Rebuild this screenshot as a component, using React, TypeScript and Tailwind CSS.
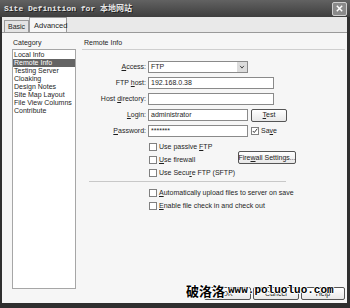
import type { ReactNode } from "react";

const FONT = "font-['Liberation_Sans','Noto_Sans_CJK_SC',sans-serif]";

function Check({ checked }: { checked?: boolean }) {
  return (
    <span className="flex h-[8px] w-[8px] shrink-0 items-center justify-center border border-[#808080] bg-white">
      {checked && (
        <svg viewBox="0 0 8 8" className="h-[6px] w-[6px]">
          <path d="M1 4l2 2 4-5" fill="none" stroke="#333" strokeWidth="1.3" />
        </svg>
      )}
    </span>
  );
}

function Btn({ children, className = "" }: { children: ReactNode; className?: string }) {
  return (
    <div
      className={`flex items-center justify-center whitespace-nowrap rounded-[2px] border border-[#555] bg-gradient-to-b from-white to-[#e8e8e8] text-[#222] ${className}`}
    >
      {children}
    </div>
  );
}

function Field({ label, children }: { label: ReactNode; children: ReactNode }) {
  return (
    <div className="flex h-[12px] items-center">
      <div className="mr-[2px] w-[64px] text-right">{label}</div>
      {children}
    </div>
  );
}

function Input({ value, w }: { value?: string; w: string }) {
  return (
    <div className={`flex h-[12px] items-center border border-[#8a8a8a] bg-white pl-[2px] ${w}`}>
      {value}
    </div>
  );
}

function CheckRow({ checked, children, extra }: { checked?: boolean; children: ReactNode; extra?: ReactNode }) {
  return (
    <div className="flex h-[13px] items-center whitespace-nowrap pl-[67px]">
      <Check checked={checked} />
      <span className={`ml-[2px] ${extra ? "w-[79px]" : ""}`}>{children}</span>
      {extra}
    </div>
  );
}

const categories = [
  "Local Info",
  "Remote Info",
  "Testing Server",
  "Cloaking",
  "Design Notes",
  "Site Map Layout",
  "File View Columns",
  "Contribute",
];

export default function App() {
  return (
    <div className={`relative flex h-[308px] w-[350px] flex-col overflow-hidden bg-[#2f2f2f] text-[7px] leading-[8px] text-[#1e1e1e] ${FONT}`}>
      {/* title bar */}
      <div className="flex h-[17px] shrink-0 items-center bg-gradient-to-b from-[#626262] to-[#3e3e3e] pl-[4px] pr-[3px]">
        <span className="font-['Liberation_Mono','Noto_Sans_CJK_SC',monospace] text-[8px] font-bold text-[#e6e6e6] [text-shadow:1px_1px_0_#222]">
          Site Definition for 本地网站
        </span>
        <div className="ml-auto flex h-[14px] w-[15px] items-center justify-center rounded-[2px] border border-[#cfcfcf] bg-[#8a8a8a]">
          <svg viewBox="0 0 10 10" className="h-[9px] w-[9px]">
            <path d="M2 2l6 6M8 2l-6 6" stroke="#fff" strokeWidth="1.6" />
          </svg>
        </div>
      </div>

      <div className="mb-[5px] ml-[2px] mr-[3px] flex flex-1 flex-col bg-[#e9e9e9]">
        {/* tabs */}
        <div className="flex h-[15px] shrink-0 items-end pl-[2px]">
          <div className="flex h-[12px] w-[25px] items-center border border-b-0 border-[#9a9a9a] bg-[#e4e4e4] pl-[3px]">
            Basic
          </div>
          <div className="-mb-px flex h-[16px] w-[38px] items-center border border-b-0 border-[#9a9a9a] bg-[#f6f6f6] pl-[4px] text-[7.5px]">
            Advanced
          </div>
        </div>

        {/* panel */}
        <div className="flex flex-1 border-t border-[#9a9a9a] bg-[#f6f6f6] pl-[10px] pt-[6px]">
          <div className="flex w-[64px] flex-col pb-[14px]">
            <div className="h-[8px] pl-[1px]">Category</div>
            <div className="mt-[2px] flex flex-1 flex-col border border-[#a6a6a6] bg-white pt-[1px]">
              {categories.map((c, i) => (
                <div
                  key={c}
                  className={`h-[8px] pl-[1px] ${i === 1 ? "bg-[#646464] text-white" : ""}`}
                >
                  {c}
                </div>
              ))}
            </div>
          </div>

          <div className="ml-[6px] flex flex-1 flex-col pb-[3px] pr-[2px]">
            <div className="h-[8px] pl-[2px]">Remote Info</div>
            <div className="mt-[2px] h-[2px] border-t border-[#cfcfcf] border-b-white" />

            <div className="mt-[10px] flex flex-col gap-[4px]">
              <Field label={<><span className="underline">A</span>ccess:</>}>
                <div className="flex h-[12px] w-[100px] items-center border border-[#8a8a8a] bg-white pl-[2px]">
                  FTP
                  <div className="ml-auto flex h-[10px] w-[10px] items-center justify-center bg-[#dcdcdc]">
                    <svg viewBox="0 0 8 8" className="h-[6px] w-[6px]">
                      <path d="M1.5 2.5l2.5 3 2.5-3" fill="none" stroke="#444" strokeWidth="1.3" />
                    </svg>
                  </div>
                </div>
              </Field>
              <Field label={<>FTP <span className="underline">h</span>ost:</>}>
                <Input value="192.168.0.38" w="w-[126px]" />
              </Field>
              <Field label={<>Host <span className="underline">d</span>irectory:</>}>
                <Input w="w-[126px]" />
              </Field>
              <Field label={<><span className="underline">L</span>ogin:</>}>
                <Input value="administrator" w="w-[100px]" />
                <Btn className="ml-[3px] h-[13px] w-[36px]">
                  <span><span className="underline">T</span>est</span>
                </Btn>
              </Field>
              <Field label={<><span className="underline">P</span>assword:</>}>
                <Input value="*******" w="w-[100px]" />
                <span className="ml-[3px]"><Check checked /></span>
                <span className="ml-[2px]">Sa<span className="underline">v</span>e</span>
              </Field>
            </div>

            <div className="mt-[3px] flex flex-col">
              <CheckRow>Use passive <span className="underline">F</span>TP</CheckRow>
              <CheckRow
                extra={
                  <Btn className="-mt-[4px] h-[13px] w-[58px]">
                    <span>Fire<span className="underline">w</span>all Settings...</span>
                  </Btn>
                }
              >
                <span className="underline">U</span>se firewall
              </CheckRow>
              <CheckRow>Use Secu<span className="underline">r</span>e FTP (SFTP)</CheckRow>
            </div>

            <div className="ml-[7px] mt-[2px] h-[2px] w-[197px] border-t border-[#c8c8c8] border-b-white" />

            <div className="mt-[3px] flex flex-col">
              <CheckRow><span className="underline">A</span>utomatically upload files to server on save</CheckRow>
              <CheckRow><span className="underline">E</span>nable file check in and check out</CheckRow>
            </div>

            <div className="mt-auto flex justify-end gap-[2px]">
              <Btn className="h-[13px] w-[47px]">OK</Btn>
              <Btn className="h-[13px] w-[46px]">Cancel</Btn>
              <Btn className="h-[13px] w-[44px]">Help</Btn>
            </div>
          </div>
        </div>
      </div>

      {/* watermark */}
      <div className="absolute left-[186px] top-[283px] flex items-center">
        <span className="font-['Noto_Sans_CJK_SC',sans-serif] text-[13px] font-bold leading-[15px] text-black [text-shadow:1px_0_#fff,-1px_0_#fff,0_1px_#fff,0_-1px_#fff]">
          破洛洛
        </span>
        <span className="ml-[3px] font-['Liberation_Mono',monospace] text-[11px] font-bold leading-[13px] text-black [text-shadow:1px_0_#fff,-1px_0_#fff,0_1px_#fff,0_-1px_#fff]">
          www.poluoluo.com
        </span>
      </div>
    </div>
  );
}
